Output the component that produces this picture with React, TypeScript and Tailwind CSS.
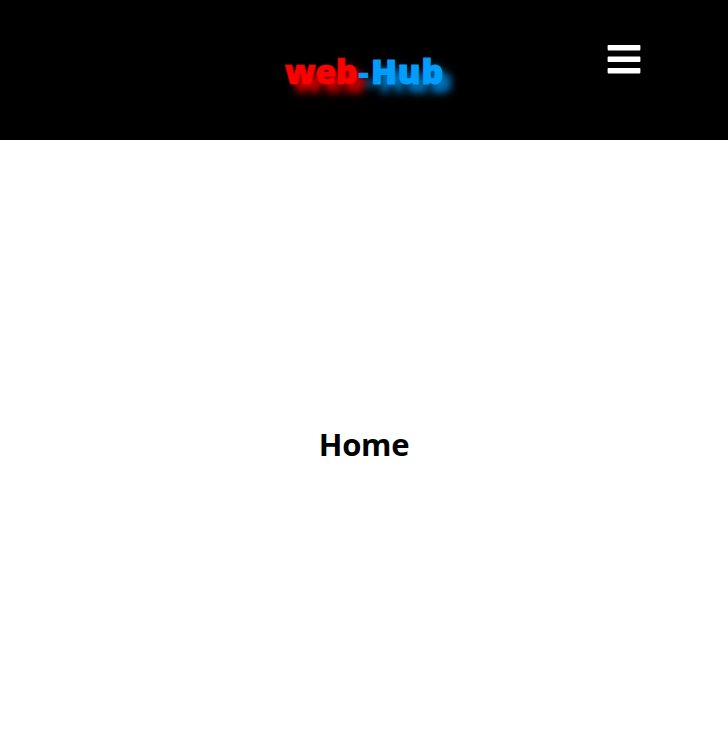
import React from "react";

function MenuIcon() {
  return (
    <svg width="34" height="30" viewBox="0 0 34 30" fill="currentColor" aria-hidden="true">
      <rect x="0.6" y="1" width="32.8" height="5.4" rx="0.8" />
      <rect x="0.6" y="12.6" width="32.8" height="5.4" rx="0.8" />
      <rect x="0.6" y="24" width="32.8" height="5.4" rx="0.8" />
    </svg>
  );
}

export default function App() {
  return (
    <div className="flex h-[744px] w-[728px] flex-col overflow-hidden bg-white font-['Open_Sans',sans-serif]">
      <header className="grid h-[140px] shrink-0 grid-cols-[1fr_auto_1fr] bg-black">
        <div />
        <h1 className="mt-[47px] pl-px text-[34px] leading-[48px] font-extrabold whitespace-nowrap [-webkit-text-stroke:0.7px_currentColor]">
          <span className="tracking-[-0.5px] text-[#ff0000] [text-shadow:8px_8px_8px_#ff0000]">web</span>
          <span className="text-[#009dff] [text-shadow:8px_8px_8px_#009dff]">
            <span className="ml-px tracking-[2px] [-webkit-text-stroke:0px]">-</span>
            <span className="tracking-[0.9px] [-webkit-text-stroke:1.1px_currentColor]">Hub</span>
          </span>
        </h1>
        <button aria-label="Menu" className="mt-[44px] mr-[87px] h-[30px] justify-self-end text-white">
          <MenuIcon />
        </button>
      </header>
      <main className="flex justify-center">
        <h2 className="mt-[282px] text-[31px] leading-[44px] font-bold tracking-[-0.3px] text-black">Home</h2>
      </main>
    </div>
  );
}
